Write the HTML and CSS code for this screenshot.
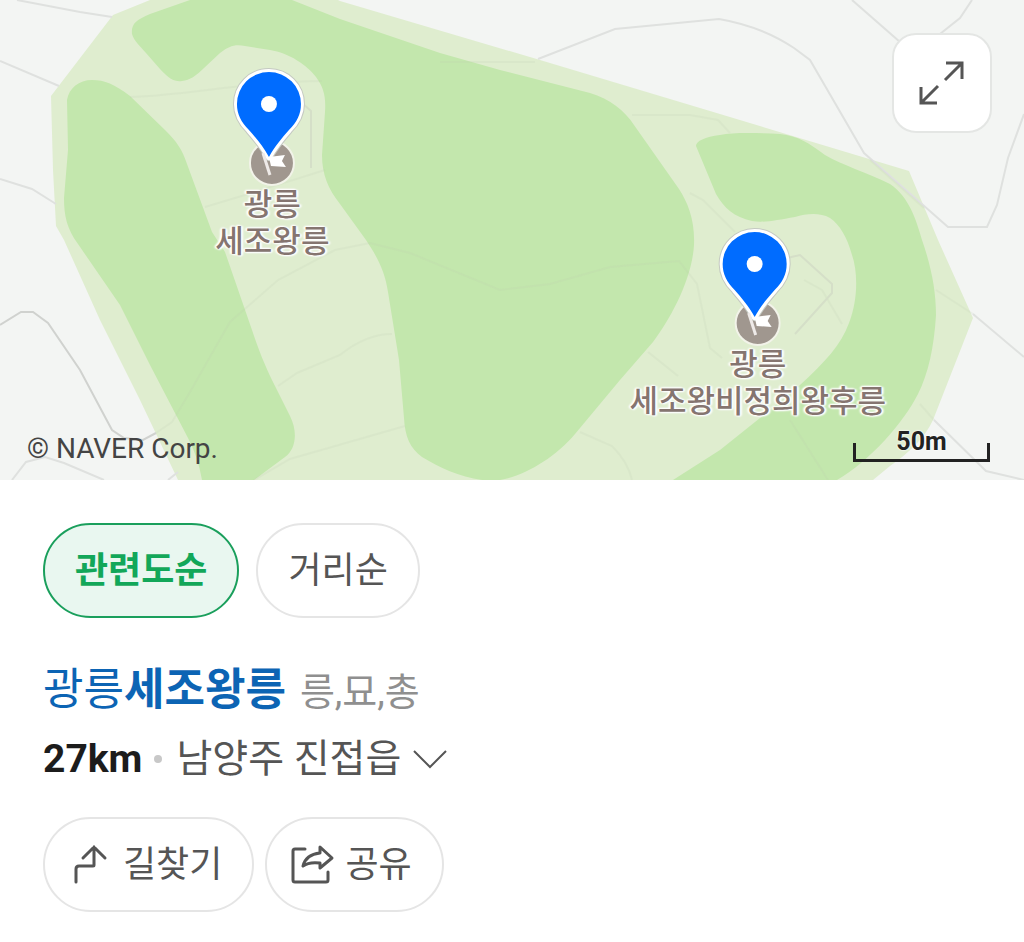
FILE: index.html
```html
<!DOCTYPE html>
<html lang="ko">
  <head>
    <meta charset="UTF-8" />
    <meta name="viewport" content="width=device-width, initial-scale=1.0" />
    <title>광릉 세조왕릉</title>
    <link rel="stylesheet" href="styles.css">
  </head>
  <body>
    <section class="map">
      <svg class="map-tiles" viewBox="0 0 1024 480" aria-hidden="true">
        <rect width="1024" height="480" fill="#f3f5f3" />
        <!-- park -->
        <path fill="#dfedcf" d="M150 0L113 15L51 96L53 170L56 226L64 240L100 320L140 400L178 480H873L890 466Q922 444 933 420L973 318L938 240L909 171L680 102L540 60L340 1L338 0Z" />
        <!-- woods -->
        <g fill="#c3e7ad">
          <path d="M67 100C69 88 79 80 92 80C105 80 114 84 130 96L165 130C177 142 182 149 187 164L212 232L225 252L252 330C260 354 267 370 275 386L290 416C298 432 296 449 285 457L254 480H202C199 463 195 452 188 438L150 365L120 305L78 244C67 229 64 216 64 198L68 150Z" />
          <path d="M190 0L150 14C136 20 131 24 132 34C134 41 140 46 146 53L160 69C169 79 175 82 182 81C190 80 196 76 204 68L220 53C229 46 235 44 245 46L270 50C289 53 307 65 316 77C324 88 326 97 325 112L322 155C322 174 328 189 340 204L366 240C378 258 385 272 388 292L399 360L404 418C405 437 410 448 422 457C439 467 459 477 482 480H500C524 476 555 458 575 434L620 380L653 342C671 318 692 279 694 245C695 220 688 203 679 189L634 125C625 111 610 99 590 93L500 70L440 53L340 19L292 0Z" />
          <path d="M696 146C696 141 705 137 720 135C735 132 757 133 780 134C798 136 809 143 825 155C844 166 866 172 890 184C909 197 916 219 922 240C931 266 936 290 936 315C934 348 928 374 918 394C904 422 870 461 837 480H673L720 450L760 418L800 385C825 362 841 345 849 323C858 300 858 272 852 255C847 237 840 225 830 218C819 212 806 214 795 217C777 220 765 223 752 221C734 217 724 208 716 194Z" />
        </g>
        <g fill="none" stroke="#dfe1df" stroke-width="2">
          <path d="M0 61L59 86" />
          <path d="M17 0L80 12L112 17" />
          <path d="M0 179L32 189L56 204" />
          <path d="M538 59L615 29L719 19C748 24 773 34 794 48L810 60L864 153L948 227H987L997 205L1008 158L1024 114" />
          <path d="M852 0L900 42M972 0L960 18L940 34" />
          <path d="M973 314L1024 357" />
          <path d="M934 420L986 471L1024 480" />
          <path d="M12 480L26 462L45 457L64 463L104 480M168 480L178 472" />
        </g>
        <path d="M0 325L21 312H33L48 323L80 370L112 430L124 438L143 440L156 433" fill="none" stroke="#d0d2cf" stroke-width="2" />
        <g fill="none" stroke="#bac9ac" stroke-opacity=".15" stroke-width="2">
          <path d="M130 97C190 95 250 81 322 81M205 207L245 195L325 170" />
          <path d="M156 433L172 422L190 392L230 322L278 280L335 250L370 243L410 253L500 290L550 284L610 267L679 261L697 284L710 348L722 358" />
          <path d="M278 386L297 373L340 355Q366 334 392 334M254 480L290 459L405 426M580 432L612 446Q628 462 632 480M648 352L678 376" />
          <path d="M440 62H535M632 115H690L718 120L730 133M690 193L703 200L735 232M870 160L924 208M936 290L973 314M804 280L822 290L842 324M790 420L828 480M920 404L934 420" />
        </g>
        <g fill="none" stroke="#d5dfc8" stroke-width="2">
          <path d="M302 103L311 111V168M787 258L800 255L832 284V293L795 334" />
        </g>
      </svg>

      <svg class="symbols" aria-hidden="true">
        <symbol id="pin" viewBox="0 0 80 120">
          <circle cx="40" cy="97" r="22" fill="#a0978f" stroke="#f2f3e9" stroke-width="2" />
          <path d="M37 91C31 80 24 72 17 64C9 56 5 48 5 38A32 32 0 0 1 69 38C69 48 65 56 57 64C50 72 43 80 37 91Z" fill="#006cff" stroke="#c4c9c2" stroke-width="8" stroke-linejoin="round" />
          <path d="M37 91C31 80 24 72 17 64C9 56 5 48 5 38A32 32 0 0 1 69 38C69 48 65 56 57 64C50 72 43 80 37 91Z" fill="#006cff" stroke="#fff" stroke-width="6" stroke-linejoin="round" />
          <path d="M31 87L38 109" stroke="#eeeae8" stroke-width="3" />
          <path d="M37 91L53 89L50 95L54 101L39 100Z" fill="#fff" />
          <path d="M37 91C31 80 24 72 17 64C9 56 5 48 5 38A32 32 0 0 1 69 38C69 48 65 56 57 64C50 72 43 80 37 91Z" fill="#006cff" />
          <circle cx="37" cy="38" r="8" fill="#fff" />
        </symbol>
      </svg>

      <div class="marker tomb-king">
        <svg class="pin" aria-hidden="true"><use href="#pin" /></svg>
        <span>광릉<br>세조왕릉</span>
      </div>
      <div class="marker tomb-queen">
        <svg class="pin" aria-hidden="true"><use href="#pin" /></svg>
        <span>광릉<br>세조왕비정희왕후릉</span>
      </div>

      <button class="expand" type="button" aria-label="지도 확대">
        <svg width="48" height="48" viewBox="0 0 48 48" aria-hidden="true">
          <path d="M28 4H44V20M44 4L27 21M3 28V44H19M3 44L20 27" fill="none" stroke="#555" stroke-width="3" />
        </svg>
      </button>
      <span class="copyright">© NAVER Corp.</span>
      <span class="scale">50m</span>
    </section>

    <main>
      <div class="filters">
        <button class="pill active" type="button" aria-pressed="true">관련도순</button>
        <button class="pill" type="button" aria-pressed="false">거리순</button>
      </div>

      <article class="place">
        <h2>
          <a href="#place">광릉<b>세조왕릉</b></a>
          <span class="category">릉,묘,총</span>
        </h2>
        <div class="location">
          <strong>27km</strong>
          <i class="dot"></i>
          <button class="address" type="button">
            남양주 진접읍
            <svg width="34" height="22" viewBox="0 0 34 22" aria-hidden="true">
              <path d="M1 3L17 19L33 3" fill="none" stroke="#555" stroke-width="2" />
            </svg>
          </button>
        </div>
        <div class="actions">
          <button class="pill" type="button">
            <svg class="icon" viewBox="0 0 50 50" aria-hidden="true">
              <path d="M9 42V29Q9 26 12 26H26Q27 26 27 25V7M16 18L27 7L38 18" fill="none" stroke="#555" stroke-width="3" stroke-linecap="round" />
            </svg>
            길찾기
          </button>
          <button class="pill" type="button">
            <svg class="icon" viewBox="0 0 50 50" aria-hidden="true">
              <path d="M16 9H6Q4 9 4 11V40Q4 42 6 42H37Q39 42 39 40V32" fill="none" stroke="#555" stroke-width="3" stroke-linecap="round" />
              <path d="M14 26C16 18 21 14 31 13V7L43 18L31 28V23C23 22 18 23 14 26Z" fill="none" stroke="#555" stroke-width="3" stroke-linejoin="round" />
            </svg>
            공유
          </button>
        </div>
      </article>
    </main>
  </body>
</html>
```

FILE: styles.css
```css
* {
  box-sizing: border-box;
}
body {
  margin: 0;
  background-color: #fff;
  color: #555;
  font-family: Roboto, "Noto Sans CJK KR", sans-serif;
  font-size: 36px;
}
button {
  margin: 0;
  background: none;
  color: inherit;
  font: inherit;
  cursor: pointer;
}
.map {
  position: relative;
  overflow: hidden;
}
.map-tiles {
  display: block;
  width: 100%;
  height: auto;
}
.symbols {
  display: none;
}
.marker {
  position: absolute;
  display: flex;
  flex-direction: column;
  align-items: center;
  transform: translateX(-50%);
  color: #857570;
  font-size: 31px;
  font-weight: 500;
  line-height: 37px;
  text-align: center;
  white-space: nowrap;
  text-shadow: 0 0 2px #fff, 0 0 2px #fff, 1px 1px 2px #fff, -1px -1px 2px #fff, 2px 0 2px #fff, -2px 0 2px #fff;
}
.tomb-king {
  left: 26.6%;
  top: 13.8%;
}
.tomb-queen {
  left: 74%;
  top: 47.1%;
}
.pin {
  width: 80px;
  height: 120px;
}
.expand {
  position: absolute;
  top: 33px;
  right: 32px;
  display: flex;
  align-items: center;
  justify-content: center;
  width: 100px;
  height: 100px;
  padding: 0;
  border: 2px solid #e4e6e4;
  border-radius: 24px;
  background-color: #fff;
}
.copyright {
  position: absolute;
  left: 27px;
  bottom: 14px;
  color: #444;
  font-size: 28px;
  line-height: 34px;
}
.scale {
  position: absolute;
  right: 34px;
  bottom: 18px;
  width: 137px;
  height: 36px;
  color: #222;
  font-size: 25px;
  font-weight: 700;
  line-height: 32px;
  text-align: center;
  text-shadow: 0 0 2px #fff, 0 0 2px #fff;
}
.scale::after {
  content: "";
  position: absolute;
  left: 0;
  right: 0;
  bottom: 0;
  height: 16px;
  border: 3px solid #222;
  border-top: 0;
}
main {
  padding: 43px 43px 30px;
}
.filters {
  display: flex;
  gap: 17px;
}
.pill {
  display: flex;
  align-items: center;
  gap: 6px;
  height: 95px;
  padding: 0 30px;
  border: 2px solid #e5e5e5;
  border-radius: 48px;
  line-height: 54px;
}
.pill.active {
  border-color: #1a9f5c;
  background-color: #e9f7f0;
  color: #12a759;
  font-weight: 700;
}
.place {
  margin-top: 40px;
}
h2 {
  display: flex;
  align-items: baseline;
  gap: 14px;
  margin: 0;
  font-size: 44px;
  font-weight: 400;
  line-height: 64px;
}
h2 a {
  color: #0c64b4;
  text-decoration: none;
}
.category {
  color: #8f8f8f;
  font-size: 38px;
}
.location {
  display: flex;
  align-items: center;
  margin-top: 3px;
  font-size: 39px;
  line-height: 64px;
}
.location strong {
  color: #1c1c1c;
}
.dot {
  width: 8px;
  height: 8px;
  margin: 0 14px 0 12px;
  border-radius: 50%;
  background-color: #c8c8c8;
}
.address {
  display: flex;
  align-items: center;
  gap: 12px;
  padding: 0;
  border: 0;
}
.actions {
  display: flex;
  gap: 11px;
  margin-top: 26px;
}
.actions .pill {
  padding-left: 22px;
}
.icon {
  width: 50px;
  height: 50px;
}
```
